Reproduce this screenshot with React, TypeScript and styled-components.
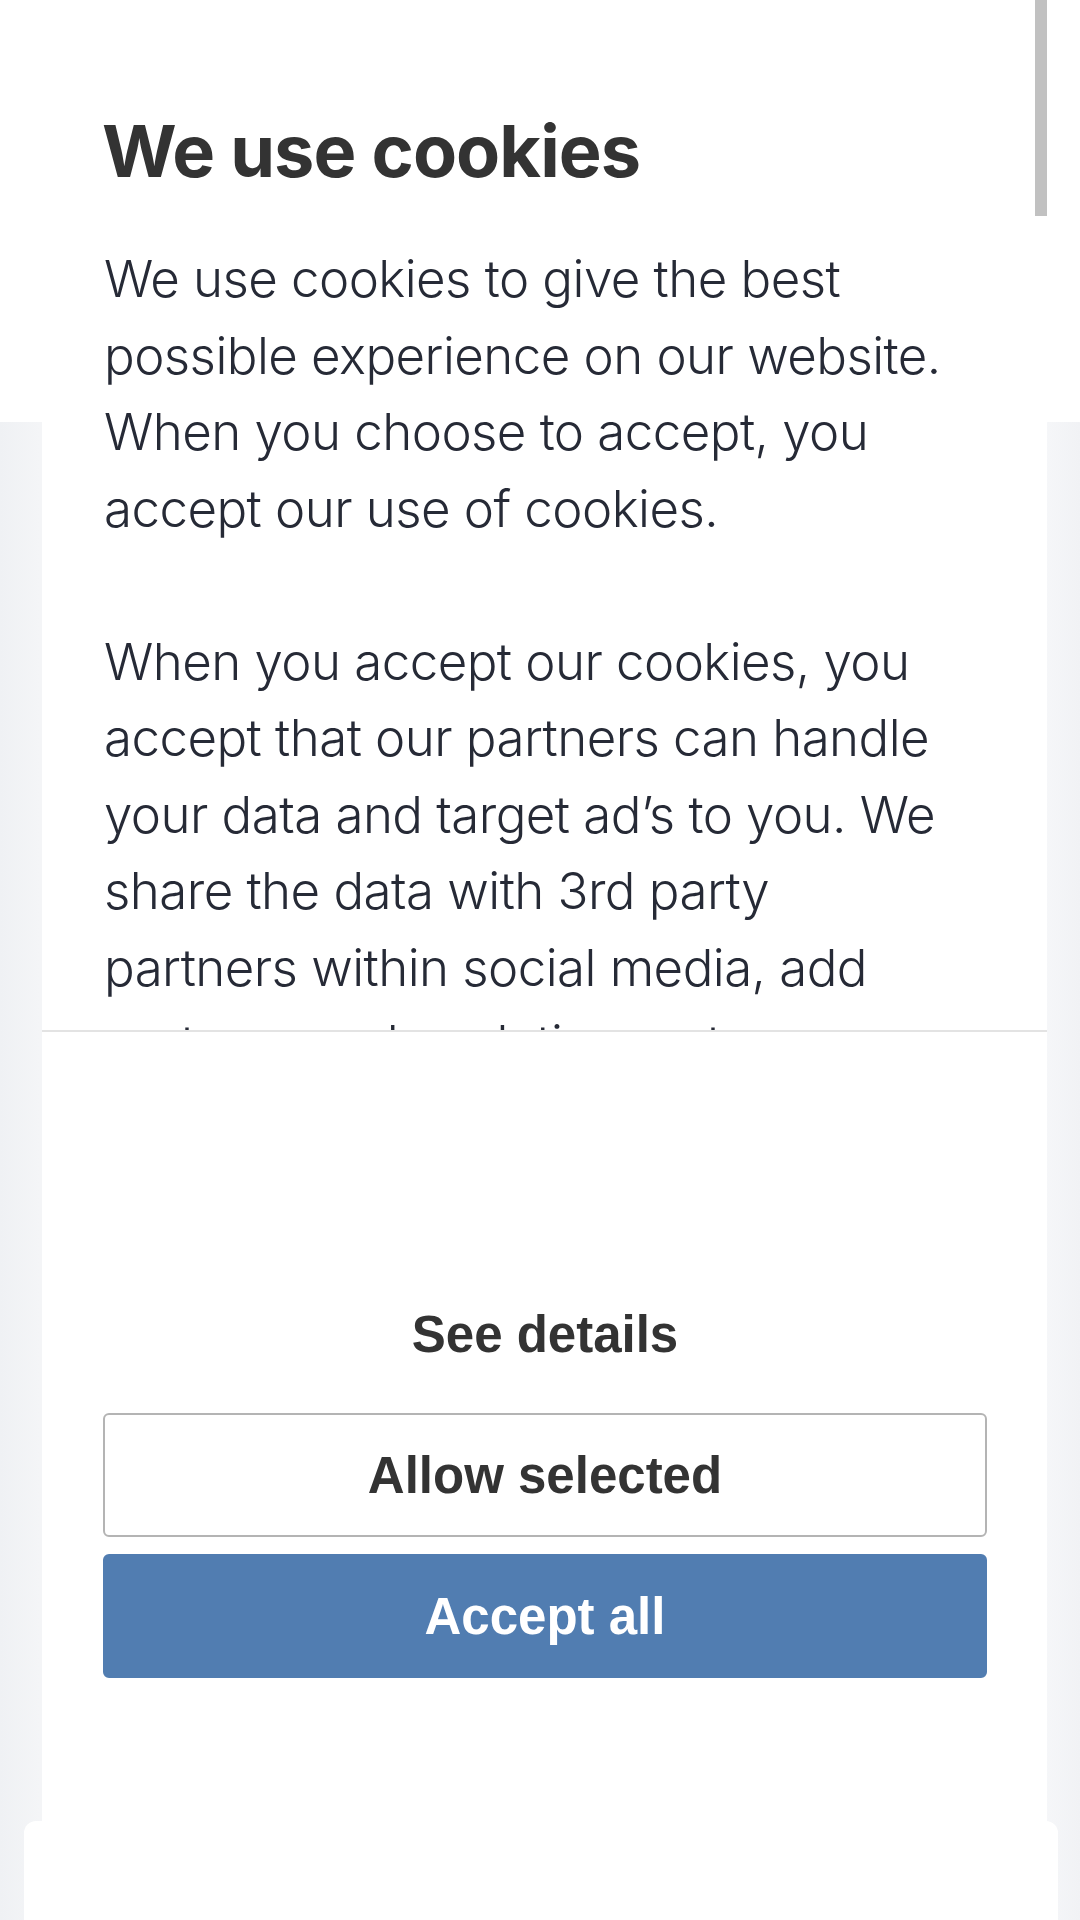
import styled, { createGlobalStyle } from 'styled-components'

const GlobalStyle = createGlobalStyle`
  html, body {
    margin: 0;
    padding: 0;
  }
  body {
    width: 1080px;
    font-family: Inter, 'Liberation Sans', sans-serif;
  }
  * {
    box-sizing: border-box;
  }
`

const Page = styled.div`
  width: 1080px;
  height: 1920px;
  overflow: hidden;
  display: flex;
  flex-direction: column;
  background:
    linear-gradient(180deg, #ffffff 0, #ffffff 422px, transparent 422px),
    linear-gradient(90deg, #eff1f4 0, #f4f5f7 40px, #f6f7f9 1040px, #f1f2f5 1080px);
`

const Dialog = styled.section`
  margin: 0 33px 0 42px;
  height: 1821px;
  flex-shrink: 0;
  background: #ffffff;
  display: flex;
  flex-direction: column;
`

const ScrollArea = styled.div`
  position: relative;
  height: 1032px;
  flex-shrink: 0;
  overflow: hidden;
  border-bottom: 2px solid #e3e3e3;
  padding: 108px 87px 0 62px;
`

const ScrollThumb = styled.div`
  position: absolute;
  top: 0;
  right: 0;
  width: 12px;
  height: 216px;
  background: #c1c1c1;
`

const Title = styled.h1`
  margin: 0 0 0 -2px;
  font-family: Inter, 'Liberation Sans', sans-serif;
  font-weight: 700;
  font-size: 72px;
  line-height: 1.2;
  letter-spacing: -0.95px;
  color: #333333;
`

const Body = styled.div`
  margin-top: 47px;
  font-family: Inter, 'Liberation Sans', sans-serif;
  font-weight: 300;
  font-size: 51px;
  line-height: 76.5px;
  letter-spacing: -0.55px;
  color: #262a36;
`

const Paragraph = styled.p`
  margin: 0 0 76.5px;
`

const Footer = styled.div`
  flex: 1;
  display: flex;
  flex-direction: column;
  gap: 17px;
  padding: 240px 60px 0 61px;
`

const Button = styled.button<{ $variant: 'link' | 'outline' | 'primary' }>`
  height: 124px;
  width: 100%;
  display: flex;
  align-items: center;
  justify-content: center;
  font-family: 'Liberation Sans', Arial, sans-serif;
  font-weight: 700;
  font-size: 51px;
  border-radius: 6px;
  cursor: pointer;
  padding: 0;
  color: ${p => (p.$variant === 'primary' ? '#ffffff' : '#333333')};
  background: ${p => (p.$variant === 'primary' ? '#517db1' : 'transparent')};
  border: ${p =>
    p.$variant === 'outline' ? '2.5px solid #b4b4b4' : p.$variant === 'primary' ? '2px solid #517db1' : 'none'};
`

const BottomSheet = styled.div`
  flex: 1;
  margin: 0 22px 0 24px;
  background: #ffffff;
  border-radius: 12px 12px 0 0;
`

export default function App() {
  return (
    <>
      <GlobalStyle />
      <Page>
        <Dialog>
          <ScrollArea>
            <Title>We use cookies</Title>
            <Body>
              <Paragraph>
                We use cookies to give the best possible experience on our website. When you choose to accept, you
                accept our use of cookies.
              </Paragraph>
              <Paragraph>
                When you accept our cookies, you accept that our partners can handle your data and target ad’s to you.
                We share the data with 3rd party partners within social media, add partners and analytics partners.
              </Paragraph>
            </Body>
            <ScrollThumb />
          </ScrollArea>
          <Footer>
            <Button $variant="link">See details</Button>
            <Button $variant="outline">Allow selected</Button>
            <Button $variant="primary">Accept all</Button>
          </Footer>
        </Dialog>
        <BottomSheet />
      </Page>
    </>
  )
}
